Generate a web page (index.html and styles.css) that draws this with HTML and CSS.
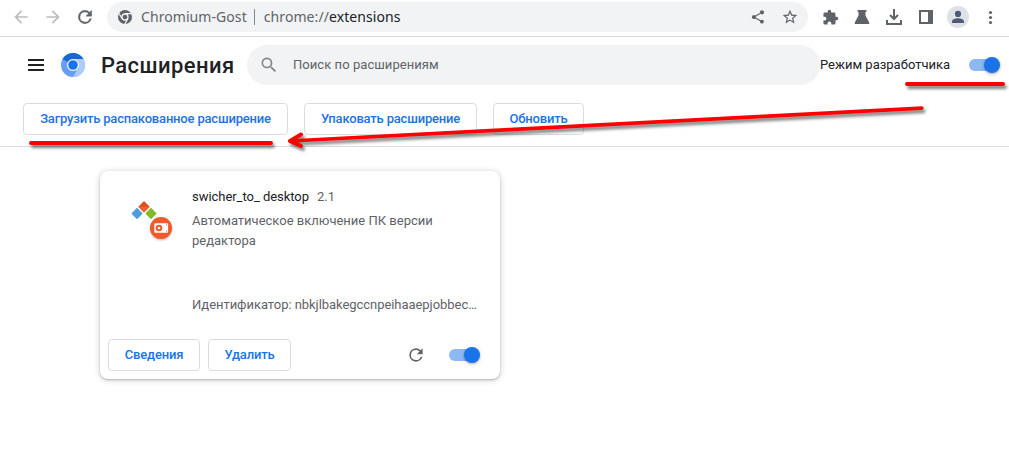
FILE: index.html
```html
<!DOCTYPE html>
<html lang="ru">
<head>
<meta charset="utf-8">
<title>Расширения</title>
<link rel="stylesheet" href="styles.css">
</head>
<body>
<div class="browser-bar">
  <svg class="nav off" viewBox="0 0 24 24"><path d="M20 11H7.83l5.59-5.59L12 4l-8 8 8 8 1.41-1.41L7.83 13H20v-2z"/></svg>
  <svg class="nav off" viewBox="0 0 24 24"><path d="M12 4l-1.41 1.41L16.17 11H4v2h12.17l-5.58 5.59L12 20l8-8z"/></svg>
  <svg class="nav" viewBox="0 0 24 24"><path stroke="#5f6368" stroke-width=".5" d="M17.65 6.35A7.96 7.96 0 0 0 12 4a8 8 0 1 0 7.73 10h-2.08A6 6 0 1 1 12 6c1.66 0 3.14.69 4.22 1.78L13 11h7V4l-2.35 2.35z"/></svg>
  <div class="omnibox">
    <svg class="site" viewBox="0 0 16 16"><circle cx="8" cy="8" r="7"/><circle cx="8" cy="8" r="3" fill="none" stroke="#f1f3f4" stroke-width="1.3"/><path d="M8 4.7h6.5M5.1 9.7L1.9 4.2M10.9 9.7L7.7 15.2" stroke="#f1f3f4" stroke-width="1.2"/></svg>
    <span class="origin">Chromium-Gost</span><span class="bar"></span><span class="scheme">chrome://</span><span class="host">extensions</span>
    <svg class="act share" viewBox="0 0 24 24"><path d="M18 16.08c-.76 0-1.44.3-1.96.77L8.91 12.7c.05-.23.09-.46.09-.7s-.04-.47-.09-.7l7.05-4.11A3 3 0 1 0 15 5c0 .24.04.47.09.7L8.04 9.81a3 3 0 1 0 0 4.38l7.12 4.16a2.9 2.9 0 1 0 2.84-2.27z"/></svg>
    <svg class="act" viewBox="1 1 22 22"><path d="M22 9.24l-7.19-.62L12 2 9.19 8.63 2 9.24l5.46 4.73L5.82 21 12 17.27 18.18 21l-1.63-7.03L22 9.24zM12 15.4l-3.76 2.27 1-4.28-3.32-2.88 4.38-.38L12 6.1l1.71 4.04 4.38.38-3.32 2.88 1 4.28L12 15.4z"/></svg>
  </div>
  <div class="tools">
    <svg viewBox="0 0 24 24" width="17" height="17"><path d="M20.500 11H19V7a2 2 0 0 0-2-2h-4V3.500a2.500 2.500 0 0 0-5 0V5H4a2 2 0 0 0-1.990 2v3.800H3.500a2.700 2.700 0 0 1 0 5.400H2V20a2 2 0 0 0 2 2h3.800v-1.500a2.700 2.700 0 0 1 5.400 0V22H17a2 2 0 0 0 2-2v-4h1.500a2.500 2.500 0 0 0 0-5z"/></svg>
    <svg viewBox="0 0 16 16" width="16" height="16"><path d="M3.500 1h9v1.800h-1v3.700l3.700 7c.4.800 0 1.500-.8 1.500H1.600c-.8 0-1.200-.7-.8-1.500l3.700-7V2.800h-1z"/></svg>
    <svg viewBox="0 0 18 18" width="18" height="18"><path d="M9 1v9M5 7l4 4 4-4M2 12v4h14v-4" fill="none" stroke="#5f6368" stroke-width="2"/></svg>
    <svg viewBox="0 0 16 16" width="16" height="16"><path d="M1 1h14v14H1zM3 3v10h7V3z" fill-rule="evenodd"/></svg>
    <svg viewBox="0 0 22 22" width="22" height="22"><circle cx="11" cy="11" r="11" fill="#dee1e8"/><circle cx="11" cy="7.900" r="3.100" fill="#4d5b75"/><path d="M5 17v-1.500C5 13.400 8.500 12.300 11 12.300s6 1.100 6 3.200V17z" fill="#4d5b75"/></svg>
    <svg viewBox="0 0 16 16" width="16" height="16"><circle cx="8.500" cy="3.500" r="1.600"/><circle cx="8.500" cy="8.500" r="1.600"/><circle cx="8.500" cy="13.500" r="1.600"/></svg>
  </div>
</div>
<header class="page-head">
  <span class="menu"><i></i><i></i><i></i></span>
  <svg class="logo" viewBox="0 0 24 24"><circle cx="12" cy="12" r="12" fill="#669df6"/><path d="M12 12L1.600 6A12 12 0 0 1 22.400 6z" fill="#1967d2"/><path d="M12 6h10.400A12 12 0 0 1 12 24l5.200-9z" fill="#aecbfa"/><circle cx="12" cy="12" r="6" fill="#fff"/><circle cx="12" cy="12" r="4.800" fill="#1a73e8"/></svg>
  <h1>Расширения</h1>
  <div class="search">
    <svg viewBox="0 0 24 24" width="20" height="20"><path d="M15.500 14h-.79l-.28-.27A6.470 6.470 0 0 0 16 9.500 6.500 6.500 0 1 0 9.500 16c1.610 0 3.090-.59 4.230-1.570l.27.28v.79l5 4.990L20.490 19l-4.990-5zm-6 0a4.500 4.500 0 1 1 0-9 4.500 4.500 0 0 1 0 9z"/></svg>
    <span>Поиск по расширениям</span>
  </div>
  <span class="dev">Режим разработчика</span>
  <span class="toggle"></span>
</header>
<div class="dev-bar">
  <button class="btn load">Загрузить распакованное расширение</button>
  <button class="btn pack">Упаковать расширение</button>
  <button class="btn update">Обновить</button>
</div>
<main>
  <article class="card">
    <div class="info">
      <svg class="ext-icon" viewBox="0 0 44 40" width="44" height="40"><path d="M14 0l5.700 5.700-5.700 5.700-5.700-5.700z" fill="#dd4f1c"/><path d="M8.300 5.700h11.400l-5.700 5.700z" fill="#f0652f"/><path d="M7 6.800l5.700 5.700L7 18.200l-5.700-5.700z" fill="#4b9edb"/><path d="M21 6.800l5.700 5.700-5.700 5.700-5.700-5.700z" fill="#7fba27"/><circle class="badge" cx="31" cy="27" r="11"/><rect x="24.300" y="22.300" width="13.800" height="9.500" rx="1" fill="#fff"/><circle cx="29" cy="27" r="2.300" fill="#fff" stroke="#f1592a" stroke-width="2"/><path d="M36 23.500h1v1h-1zM36 29.500h1v1h-1z" fill="#f1592a"/></svg>
      <div class="text">
        <div class="name">swicher_to_ desktop<span>2.1</span></div>
        <p class="desc">Автоматическое включение ПК версии редактора</p>
        <div class="ident">Идентификатор: nbkjlbakegccnpeihaaepjobbec…</div>
      </div>
    </div>
    <div class="actions">
      <button class="btn details">Сведения</button>
      <button class="btn remove">Удалить</button>
      <svg class="reload" viewBox="0 0 24 24"><path d="M17.65 6.35A7.960 7.960 0 0 0 12 4a8 8 0 1 0 7.730 10h-2.080A6 6 0 1 1 12 6c1.660 0 3.140.69 4.220 1.780L13 11h7V4l-2.350 2.350z"/></svg>
      <span class="toggle"></span>
    </div>
  </article>
</main>
<svg class="marks" viewBox="0 0 1009 459">
  <path d="M907 84H1003M31 143H271"/>
  <path d="M290 141L301 134.500M290 141L301 146"/>
  <path class="shaft" d="M290 139.300L922 106.300Q925.500 108 922 110L290 142.800Q287 141 290 139.300z"/>
</svg>
</body>
</html>
```
FILE: styles.css
```css
* { box-sizing: border-box; }
body { margin: 0; height: 459px; overflow: hidden; background: #fff; color: #202124; font: 13px/20px Roboto, sans-serif; }
svg { display: block; flex: none; fill: #5f6368; }
.browser-bar { display: flex; height: 37px; padding: 2px 0 4px 11px; border-bottom: 1px solid #dadce0; }
.nav { width: 20px; height: 20px; margin: 5px 12px 0 0; }
.nav.off { fill: #babcbe; }
.omnibox { display: flex; align-items: center; width: 701px; height: 30px; padding: 0 10px; border-radius: 15px; background: #f1f3f4; font: 14px/20px "Noto Sans", sans-serif; color: #5f6368; white-space: nowrap; }
.site { width: 16px; height: 16px; margin-right: 8px; }
.origin { letter-spacing: .07px; }
.bar { width: 1px; height: 16px; margin: 0 9px 0 7px; background: #80868b; }
.scheme, .host { letter-spacing: .08px; }
.host { color: #202124; }
.act { width: 16px; height: 16px; }
.share { margin: 0 16px 0 auto; }
.tools { display: grid; grid-template-columns: repeat(6, 32px); place-items: center; height: 30px; margin-left: 6px; }
.page-head { display: flex; align-items: center; height: 56px; padding-left: 28px; }
.menu { display: grid; gap: 3px; width: 16px; margin-right: 17px; }
.menu i { height: 2px; background: #202124; }
.logo { width: 24px; height: 24px; margin-right: 16px; }
h1 { width: 146px; margin: 0; padding-top: 2px; font-size: 22px; font-weight: 500; line-height: 32px; letter-spacing: .42px; white-space: nowrap; }
.search { display: flex; align-items: center; width: 573px; height: 40px; padding-left: 12px; border-radius: 20px; background: #f1f3f4; color: #5f6368; }
.search svg { margin-right: 14px; fill: #80868b; }
.search span { letter-spacing: .06px; }
.dev { width: 149px; white-space: nowrap; }
.toggle { display: flex; align-items: center; justify-content: flex-end; width: 28px; height: 12px; border-radius: 6px; background: #8cb8f4; }
.toggle::after { content: ""; flex: none; width: 16px; height: 16px; margin-right: -3px; border-radius: 50%; background: #1a73e8; box-shadow: 0 1px 3px rgba(0,0,0,.35); }
.dev-bar { display: flex; gap: 16px; height: 54px; padding: 10px 0 0 23px; border-bottom: 1px solid #dadce0; }
.btn { height: 32px; padding: 0; border: 1px solid #dadce0; border-radius: 4px; background: #fff; color: #1a73e8; font: 500 13px/20px Roboto, sans-serif; letter-spacing: -.18px; white-space: nowrap; }
.load { width: 265px; }
.pack { width: 173px; }
.update { width: 91px; }
.details { width: 92px; }
.remove { width: 83px; }
main { padding: 24px 0 0 100px; }
.card { display: flex; flex-direction: column; width: 400px; height: 208px; border-radius: 8px; box-shadow: 0 1px 2px rgba(60,64,67,.3), 0 1px 6px 1px rgba(60,64,67,.18); }
.info { display: flex; height: 160px; padding: 16px 20px 0 30px; }
.ext-icon { margin: 14px 18px 0 0; overflow: visible; }
.badge { fill: #f1592a; filter: drop-shadow(0 1px 1px rgba(0,0,0,.3)); }
.text { min-width: 0; flex: 1; }
.name { margin-bottom: 4px; letter-spacing: -.04px; }
.name span { margin-left: 8px; color: #5f6368; }
.desc { width: 270px; height: 84px; margin: 0; color: #5f6368; }
.ident { white-space: nowrap; letter-spacing: -.05px; color: #5f6368; }
.actions { display: flex; align-items: center; gap: 8px; height: 48px; padding: 0 23px 0 8px; }
.reload { width: 20px; height: 20px; margin: 0 15px 0 auto; }
.marks { position: absolute; left: 0; top: 0; width: 1009px; height: 459px; fill: none; stroke: #f00; stroke-width: 4; stroke-linecap: round; pointer-events: none; filter: drop-shadow(2px 3px 1.5px rgba(0,0,0,.5)); }
.shaft { fill: #f00; stroke: none; }
```
